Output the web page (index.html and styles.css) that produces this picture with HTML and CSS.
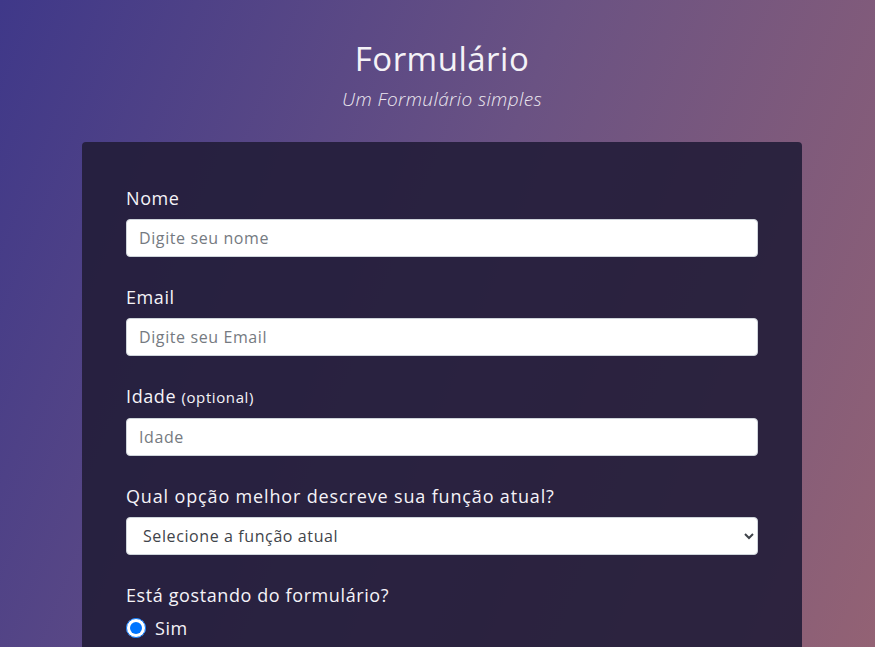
FILE: index.html
```html
<!DOCTYPE html>
<html lang="pt">
<head>
<meta charset="utf-8">
<title>Formulário</title>
<link rel="stylesheet" href="styles.css">
</head>
<body>
<div class="page">
  <header class="header">
    <h1 class="title">Formulário</h1>
    <p class="subtitle">Um Formulário simples</p>
  </header>
  <form class="card">
    <div class="group">
      <label class="label" for="name">Nome</label>
      <input class="field" id="name" type="text" placeholder="Digite seu nome">
    </div>
    <div class="group">
      <label class="label" for="email">Email</label>
      <input class="field" id="email" type="email" placeholder="Digite seu Email">
    </div>
    <div class="group">
      <label class="label" for="age">Idade <span class="opt">(optional)</span></label>
      <input class="field" id="age" type="number" placeholder="Idade">
    </div>
    <div class="group">
      <label class="label label-wide" for="role">Qual opção melhor descreve sua função atual?</label>
      <select class="field select" id="role">
        <option>Selecione a função atual</option>
        <option>Estudante</option>
        <option>Trabalho em tempo integral</option>
      </select>
    </div>
    <div class="group">
      <p class="label">Está gostando do formulário?</p>
      <label class="radio-row"><input class="radio" type="radio" name="like" checked> <span>Sim</span></label>
    </div>
  </form>
</div>
</body>
</html>
```
FILE: styles.css
```css
* { box-sizing: border-box; }
html, body { height: 100%; }
body {
  margin: 0;
  padding-left: 9px;
  font-family: "Open Sans", "Noto Sans", sans-serif;
  color: #f3f3f3;
  background: linear-gradient(112deg, #3f3889 0%, #6a5283 50%, #936274 100%);
  overflow: hidden;
}
.page {
  width: 720px;
  margin: 0 auto;
  padding-top: 40px;
}
.header { text-align: center; }
.title {
  margin: 0;
  font-size: 33px;
  line-height: 38px;
  font-weight: 400;
  letter-spacing: 0.5px;
  color: #f4f2f7;
}
.subtitle {
  margin: 8px 0 0;
  font-size: 19px;
  line-height: 26px;
  font-style: italic;
  font-weight: 300;
  letter-spacing: 0.4px;
  color: #ece8f0;
}
.card {
  margin-top: 30px;
  padding: 43px 44px 40px;
  background: rgba(34, 29, 56, 0.9);
  border-radius: 4px;
  min-height: 700px;
}
.group { margin-bottom: 27px; }
.label {
  display: block;
  margin: 0 0 8px;
  font-size: 18px;
  line-height: 26px;
  font-weight: 500;
  letter-spacing: 0.6px;
  color: #f5f3f8;
}
.label-wide { letter-spacing: 0.85px; }
.opt {
  font-size: 15px;
  font-weight: 400;
  letter-spacing: 0.6px;
}
.field {
  display: block;
  width: 100%;
  height: 38px;
  padding: 0 12px;
  border: 1px solid #ced4da;
  border-radius: 4px;
  background: #fff;
  font-family: inherit;
  font-size: 16px;
  letter-spacing: 0.6px;
  color: #495057;
}
.field::placeholder { color: #757a81; }
.select {
  padding: 0 12px;
  color: #3f444a;
}
.radio-row {
  display: flex;
  align-items: center;
  gap: 9px;
  font-size: 18px;
  letter-spacing: 0.6px;
  color: #f5f3f8;
}
.radio {
  width: 20px;
  height: 20px;
  margin: 0;
}
```
